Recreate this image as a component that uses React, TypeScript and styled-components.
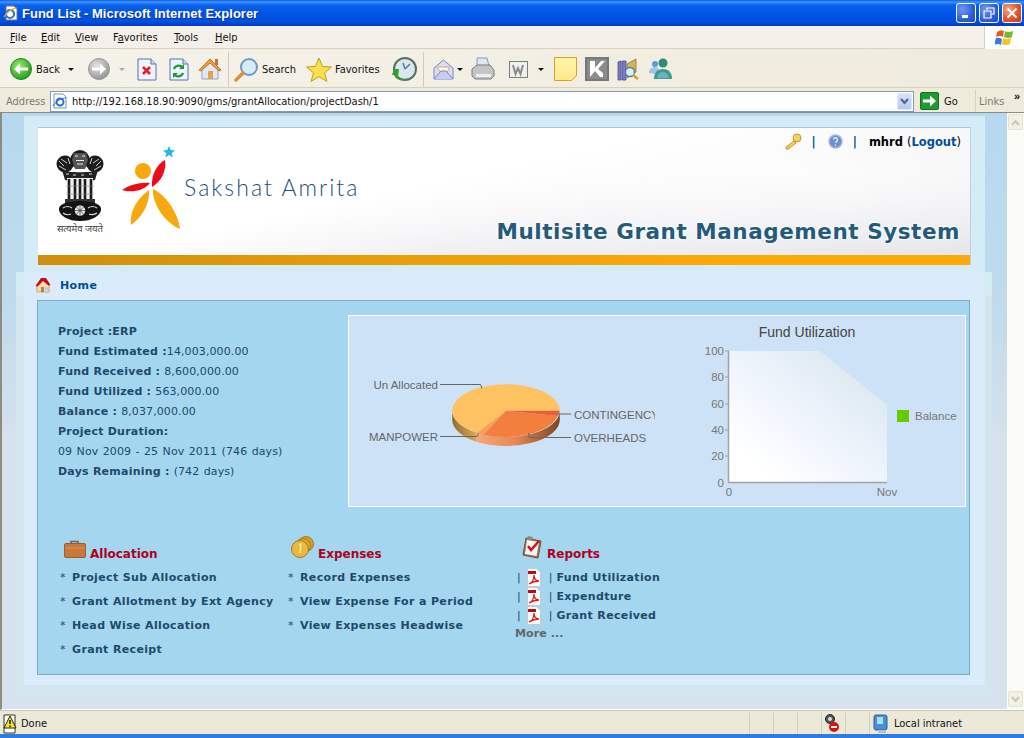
import React from "react";
import styled, { createGlobalStyle } from "styled-components";

const GlobalStyle = createGlobalStyle`
  html, body { margin: 0; padding: 0; height: 100%; overflow: hidden; background: #ece9d8; }
  #root { height: 100%; }
`;

const Window = styled.div`
  width: 1024px;
  height: 738px;
  display: flex;
  flex-direction: column;
  overflow: hidden;
  font-family: "DejaVu Sans Condensed", "Liberation Sans", Arial, sans-serif;
`;

/* ---------- chrome ---------- */
const TitleBar = styled.div`
  height: 26px;
  flex: none;
  display: flex;
  align-items: center;
  padding: 0 2px 0 3px;
  background: linear-gradient(#0a5fe8 0, #3f94ff 2px, #0a62ee 5px, #0055e5 13px, #0050de 21px, #003cc8 26px);
`;
const TitleText = styled.span`
  margin-left: 3px;
  color: #fff;
  font: bold 13px "Liberation Sans", Arial, sans-serif;
  text-shadow: 1px 1px 0 #0a2f9a;
  flex: 1;
`;
const CaptionButton = styled.div<{ $danger?: boolean; $ml?: number }>`
  width: 20px;
  height: 20px;
  box-sizing: border-box;
  margin-left: ${(p) => p.$ml ?? 0}px;
  border: 1px solid #fff;
  border-radius: 3px;
  display: flex;
  align-items: center;
  justify-content: center;
  background: ${(p) =>
    p.$danger
      ? "radial-gradient(circle at 30% 30%, #f2a58b, #e0562c 55%, #c1370f)"
      : "radial-gradient(circle at 30% 30%, #6f97f0, #2f5ed8 60%, #2048c0)"};
`;
const MenuBar = styled.div`
  height: 23px;
  flex: none;
  display: flex;
  align-items: center;
  background: #f4efe8;
  border-bottom: 1px solid #d8d2bd;
  box-sizing: border-box;
  padding-left: 10px;
`;
const MenuItem = styled.span<{ $w: number }>`
  width: ${(p) => p.$w}px;
  font-size: 11px;
  padding-top: 1px;
  color: #111;
  u { text-decoration: underline; }
`;
const FlagBox = styled.div`
  margin-left: auto;
  width: 39px;
  height: 23px;
  background: #fff;
  border-left: 1px solid #d8d2bd;
  display: flex;
  align-items: center;
  justify-content: center;
`;
const Toolbar = styled.div`
  height: 39px;
  flex: none;
  display: flex;
  align-items: center;
  padding: 2px 0 0 10px;
  box-sizing: border-box;
  background: linear-gradient(90deg, #f5f2ea, #efebdd);
  border-bottom: 1px solid #d8d2bd;
`;
const Glyph = styled.svg<{ $ml?: number }>`
  flex: none;
  display: block;
  margin-left: ${(p) => p.$ml ?? 0}px;
`;
const ToolLabel = styled.span<{ $ml?: number; $w: number }>`
  font-size: 11px;
  color: #111;
  flex: none;
  width: ${(p) => p.$w}px;
  margin-left: ${(p) => p.$ml ?? 0}px;
`;
const DropArrow = styled.span<{ $ml: number; $grey?: boolean }>`
  flex: none;
  width: 0;
  height: 0;
  margin-left: ${(p) => p.$ml}px;
  border-left: 3px solid transparent;
  border-right: 3px solid transparent;
  border-top: 3px solid ${(p) => (p.$grey ? "#b0aea4" : "#111")};
`;
const ToolSep = styled.span<{ $ml: number }>`
  flex: none;
  width: 1px;
  height: 35px;
  margin-left: ${(p) => p.$ml}px;
  background: #d3ccb5;
`;
const AddressBar = styled.div`
  height: 24px;
  flex: none;
  display: flex;
  align-items: center;
  box-sizing: border-box;
  padding: 2px 0 0 6px;
  background: #eeebdd;
`;
const AddressLabel = styled.span`
  font-size: 11px;
  color: #7d7a6e;
  width: 44px;
  flex: none;
`;
const AddressField = styled.div`
  width: 864px;
  height: 21px;
  flex: none;
  box-sizing: border-box;
  display: flex;
  align-items: center;
  background: #fff;
  border: 1px solid #7f9db9;
  padding: 0 1px;
`;
const Url = styled.span`
  margin-left: 4px;
  font-size: 11px;
  color: #111;
  flex: 1;
`;
const ComboButton = styled.div`
  width: 15px;
  height: 17px;
  border-radius: 2px;
  background: linear-gradient(#d6e2fb, #b4c9f5);
  border: 1px solid #dde6fa;
  box-sizing: border-box;
  display: flex;
  align-items: center;
  justify-content: center;
`;
const LinksBox = styled.div`
  margin-left: auto;
  width: 49px;
  height: 22px;
  box-sizing: border-box;
  border-left: 1px solid #d8d2bd;
  padding: 0 4px 0 3px;
  display: flex;
  align-items: center;
  justify-content: space-between;
  color: #7d7a6e;
  font-size: 11px;
`;
const Chevrons = styled.span`
  color: #111;
  font: bold 11px "Liberation Sans", Arial, sans-serif;
  align-self: flex-start;
`;
const Viewport = styled.div`
  flex: 1;
  min-height: 0;
  display: flex;
  border-top: 1px solid #8d8c80;
`;
const Page = styled.div`
  width: 1007px;
  flex: none;
  box-sizing: border-box;
  border-left: 2px solid #8d8c80;
  border-bottom: 1px solid #fff;
  padding-left: 1px;
  background: linear-gradient(#b6d9ef 0, #bedbec 170px, #c3dceb 225px, #c9dded 240px, #d0dfed 300px, #d6e2ee 322px);
  overflow: hidden;
`;
const Scrollbar = styled.div`
  width: 17px;
  flex: none;
  display: flex;
  flex-direction: column;
  justify-content: space-between;
  background: #fbfbf8;
  padding: 1px 0 3px;
  box-sizing: border-box;
`;
const ScrollButton = styled.div`
  width: 15px;
  height: 16px;
  margin-left: 1px;
  border-radius: 2px;
  border: 1px solid #e4e2d2;
  box-sizing: border-box;
  background: #f2f1e6;
  color: #c8c6b8;
  display: flex;
  align-items: center;
  justify-content: center;
`;
const StatusBar = styled.div`
  height: 24px;
  flex: none;
  box-sizing: border-box;
  display: flex;
  align-items: center;
  background: #ece9d8;
  border-top: 1px solid #c9c6b4;
  padding: 2px 0 0 3px;
  font-size: 11px;
  color: #111;
`;
const StatusText = styled.span`
  margin-left: 4px;
  width: 728px;
  flex: none;
`;
const StatusCell = styled.div<{ $w: number }>`
  width: ${(p) => p.$w}px;
  height: 22px;
  flex: none;
  box-sizing: border-box;
  border-left: 1px solid #d2cfbc;
  display: flex;
  align-items: center;
  gap: 4px;
  padding-left: 3px;
`;
const TaskEdge = styled.div`
  height: 4px;
  flex: none;
  background: #2f7be0;
`;

/* ---------- page ---------- */
const MidBand = styled.div`
  margin: 0 15px 0 13px;
  padding: 3px 7px 11px 8px;
  box-sizing: border-box;
  background: linear-gradient(transparent 0, transparent 159px, #d5ecf5 159px, #d5ecf5 183px, #d3e6ef 183px);
`;
const Sheet = styled.div`
  padding: 11px 15px 10px 13px;
  background: linear-gradient(#d3ecf6 0, #d3ecf6 152px, #daecfc 158px);
`;
const Banner = styled.div`
  height: 138px;
  margin-left: 1px;
  box-sizing: border-box;
  display: flex;
  flex-direction: column;
  border-top: 1px solid #a9cbe0;
  box-shadow: 1px 0 0 #b7d2e4;
  background:
    radial-gradient(ellipse 620px 90px at 78% 32%, rgba(255, 255, 255, 0.85), rgba(255, 255, 255, 0) 100%),
    linear-gradient(168deg, #fff 0, #fff 42%, #f1f0f3 62%, #e4e4e9 100%);
`;
const TopLinks = styled.div`
  height: 22px;
  flex: none;
  box-sizing: border-box;
  padding: 5px 9px 0 0;
  display: flex;
  align-items: center;
  justify-content: flex-end;
  font: 11.5px "DejaVu Sans", Verdana, sans-serif;
`;
const Pipe = styled.b<{ $ml: number }>`
  color: #004f93;
  margin-left: ${(p) => p.$ml}px;
`;
const UserName = styled.b`
  color: #000;
  margin-left: 12px;
  margin-right: 4px;
`;
const LogoutLink = styled.b`
  color: #004f93;
`;
const BannerBody = styled.div`
  flex: 1;
  display: flex;
  min-height: 0;
  padding-left: 18px;
`;
const EmblemWrap = styled.div`
  width: 48px;
  flex: none;
  display: flex;
  flex-direction: column;
  align-items: center;
`;
const Motto = styled.span`
  font: 9.5px/13px "Noto Sans", "DejaVu Sans", sans-serif;
  color: #444;
  white-space: nowrap;
`;
const LogoMark = styled.svg`
  flex: none;
  margin: -6px 0 0 16px;
`;
const BrandName = styled.span`
  font: 300 23px Lato, "Open Sans", sans-serif;
  letter-spacing: 2.05px;
  color: #1f4f78;
  margin: 23px 0 0 2px;
  white-space: nowrap;
`;
const SystemName = styled.span`
  margin: 69px 10px 0 auto;
  font: bold 21.5px "DejaVu Sans", Verdana, sans-serif;
  letter-spacing: 0.55px;
  color: #235c7b;
  white-space: nowrap;
  text-shadow: 0 0 2px #fff, 0 0 3px #fff, 0 0 3px #fff;
`;
const OrangeBar = styled.div`
  height: 10px;
  flex: none;
  background: linear-gradient(90deg, #cf8e0c 0, #e29c08 30%, #ffa908 75%);
`;
const Crumb = styled.div`
  height: 35px;
  display: flex;
  align-items: center;
  padding-top: 5px;
  box-sizing: border-box;
  margin-left: -2px;
`;
const CrumbLink = styled.b`
  margin-left: 9px;
  color: #004f93;
  font: bold 11px "DejaVu Sans", Verdana, sans-serif;
  letter-spacing: 0.4px;
`;
const Panel = styled.div`
  height: 375px;
  box-sizing: border-box;
  background: #a4d6ef;
  border: 1px solid #7fa9c8;
  padding: 14px 3px 0 20px;
  display: flex;
  flex-direction: column;
`;
const TopRow = styled.div`
  display: flex;
  height: 192px;
  flex: none;
`;
const InfoColumn = styled.div`
  width: 290px;
  flex: none;
  padding-top: 7px;
`;
const InfoLine = styled.div`
  height: 20px;
  font: 11px/20px "DejaVu Sans", Verdana, sans-serif;
  letter-spacing: 0.1px;
  word-spacing: 0.8px;
  color: #20496b;
  white-space: nowrap;
  b {
    letter-spacing: 0.23px;
    word-spacing: 0;
  }
`;
const ChartPanel = styled.div`
  width: 618px;
  flex: none;
  box-sizing: border-box;
  border: 1px solid #fff;
  background: #cde2f6;
  display: flex;
`;
const ChartSvg = styled.svg`
  display: block;
  flex: none;
  font-family: "Liberation Sans", Arial, sans-serif;
`;
const LinkColumns = styled.div`
  display: flex;
  margin-top: 27px;
  padding-left: 2px;
`;
const LinkColumn = styled.div<{ $w: number }>`
  width: ${(p) => p.$w}px;
  flex: none;
`;
const ColumnHead = styled.div<{ $ml: number }>`
  height: 31px;
  display: flex;
  align-items: flex-end;
  gap: 4px;
  padding: 0 0 4px ${(p) => p.$ml}px;
  box-sizing: border-box;
`;
const HeadTitle = styled.b`
  font: bold 12px/15px "DejaVu Sans", Verdana, sans-serif;
  color: #b00020;
  margin-bottom: -1px;
`;
const LinkRow = styled.div`
  height: 24px;
  display: flex;
  align-items: center;
  font: 11px "DejaVu Sans", Verdana, sans-serif;
  color: #20496b;
  white-space: nowrap;
`;
const Bullet = styled.span`
  width: 12px;
  flex: none;
`;
const LinkLabel = styled.b`
  letter-spacing: 0.35px;
`;
const ReportList = styled.div`
  padding-top: 3px;
`;
const ReportRow = styled.div`
  height: 19px;
  display: flex;
  align-items: center;
  font: 11px "DejaVu Sans", Verdana, sans-serif;
  color: #20496b;
  white-space: nowrap;
  padding-left: 2px;
`;
const ReportPipe = styled.span<{ $l: number; $r: number }>`
  margin: 0 ${(p) => p.$r}px 0 ${(p) => p.$l}px;
`;
const MoreLink = styled.b`
  display: block;
  color: #666;
  font: bold 11px/18px "DejaVu Sans", Verdana, sans-serif;
  letter-spacing: 0.1px;
`;

/* ---------- icons ---------- */
const RoundArrow = ({ ml, grey }: { ml?: number; grey?: boolean }) => (
  <Glyph $ml={ml} width={22} height={22} viewBox="0 0 22 22">
    <defs>
      <radialGradient id={grey ? "gr" : "gn"} cx="40%" cy="35%" r="70%">
        <stop offset="0" stopColor={grey ? "#e6e6e6" : "#9be86a"} />
        <stop offset="1" stopColor={grey ? "#8f8f8f" : "#1d9a1d"} />
      </radialGradient>
    </defs>
    <circle cx="11" cy="11" r="10.500" fill={`url(#${grey ? "gr" : "gn"})`} stroke={grey ? "#999" : "#1c8a1c"} />
    {grey ? (
      <path d="M4 9.500h8V5.500L18 11l-6 5.500v-4H4z" fill="#fff" />
    ) : (
      <path d="M18 9.500h-8V5.500L4 11l6 5.500v-4h8z" fill="#fff" />
    )}
  </Glyph>
);

const PageSheet = ({ children, ml }: { children: React.ReactNode; ml: number }) => (
  <Glyph $ml={ml} width="20" height="23" viewBox="0 0 20 23">
    <path d="M1 1h13l5 5v16H1z" fill="#eef3fd" stroke="#5a70b0" />
    <path d="M14 1v5h5" fill="#cfdcf5" stroke="#5a70b0" />
    {children}
  </Glyph>
);

const ToolbarHouse = ({ ml }: { ml: number }) => (
  <Glyph $ml={ml} width={24} height={24} viewBox="0 0 24 24">
    <path d="M4 11v11h16V11L12 4z" fill="#dfe8f8" stroke="#8fa4c8" />
    <path d="M1 13L12 2l11 11-2 1-9-8-9 8z" fill="#f39a3c" stroke="#c9702a" />
    <rect x="17" y="2" width="3" height="6" fill="#c9702a" />
    <rect x="10" y="14" width="5" height="8" fill="#e8a04a" />
  </Glyph>
);

const CrumbHouse = () => (
  <Glyph width="16" height="16" viewBox="0 0 16 16">
    <path d="M2 8v7h12V8L8 3z" fill="#f7dcae" stroke="#c9a878" />
    <path d="M0.500 9L6 1h5l4.500 7-2 .5L8 4 2.500 9.500z" fill="#c80a14" />
    <rect x="6" y="10" width="3" height="5" fill="#b8824a" />
    <rect x="10" y="10" width="3" height="3" fill="#b8d0e8" />
  </Glyph>
);

const Emblem = () => (
  <Glyph width="48" height="72" viewBox="0 0 48 72">
    <circle cx="24" cy="9.500" r="9.500" fill="#1c1c1c" />
    <circle cx="9" cy="14" r="8.500" fill="#1c1c1c" />
    <circle cx="39" cy="14" r="8.500" fill="#1c1c1c" />
    <path d="M18 3h12l2 7-3 9H19l-3-9z" fill="#555" />
    <path d="M19 6h3M26 6h3M20 10.500h8M21 14h6" stroke="#eee" strokeWidth="1.200" />
    <path d="M3 11l5 5M5 9l6 4M3 16l7 4M45 11l-5 5M43 9l-6 4M45 16l-7 4M12 8l2 6M36 8l-2 6" stroke="#ccc" />
    <path d="M6 20c6 3 30 3 36 0l-3 10c-5 2-25 2-30 0z" fill="#222" />
    <path d="M10 24h3M17 25h3M25 25h3M33 24h3" stroke="#ddd" />
    <rect x="11" y="28" width="26" height="22" fill="#f2f2f2" />
    <path d="M13 29v20M19 29v20M24 29v20M29 29v20M35 29v20" stroke="#1a1a1a" strokeWidth="2.600" />
    <path d="M10 36h28M10 44h28" stroke="#888" strokeWidth="0.600" />
    <path d="M9 49h30v4H9z" fill="#333" />
    <path d="M3 60c-1-5 6-9 21-9s22 4 21 9c-1 6-9 11-21 11S4 66 3 60z" fill="#141414" />
    <path d="M7 58c3-2 6-2 9 0M7 63c3 2 6 2 8 1M32 58c3-2 6-2 9 0M33 64c3 1 5 1 8-1" fill="none" stroke="#ddd" strokeWidth="1.200" />
    <circle cx="24" cy="60.500" r="6" fill="#e8e8e8" stroke="#111" strokeWidth="1.500" />
    <path d="M24 55.500v10M19 60.500h10M20.500 57l7 7M27.500 57l-7 7" stroke="#333" strokeWidth="0.700" />
  </Glyph>
);

const SectionPdf = () => (
  <Glyph width="14" height="19" viewBox="0 0 14 19">
    <path d="M0.500 0.500h9l4 4v14H0.500z" fill="#fbfbfb" stroke="#c8c8c8" />
    <rect x="1" y="3" width="8" height="3" fill="#b01010" />
    <path d="M2 16c3-1 5-5 5-9 0 4 2 6 5 6-3 0-7 1-10 3z" fill="none" stroke="#e01818" strokeWidth="1.300" />
  </Glyph>
);

const LINK_ROWS = {
  allocation: ["Project Sub Allocation", "Grant Allotment by Ext Agency", "Head Wise Allocation", "Grant Receipt"],
  expenses: ["Record Expenses", "View Expense For a Period", "View Expenses Headwise"],
  reports: ["Fund Utilization", "Expendture", "Grant Received"],
};

const INFO: [string, string][] = [
  ["Project :", "ERP"],
  ["Fund Estimated :", "14,003,000.00"],
  ["Fund Received : ", "8,600,000.00"],
  ["Fund Utilized : ", "563,000.00"],
  ["Balance : ", "8,037,000.00"],
  ["Project Duration:", ""],
  ["", "09 Nov 2009 - 25 Nov 2011 (746 days)"],
  ["Days Remaining : ", "(742 days)"],
];

const PieChart = () => (
  <ChartSvg width="306" height="190" viewBox="349 316 306 190">
    <defs>
      <linearGradient id="wallGold" x1="0" x2="1">
        <stop offset="0" stopColor="#8f6f30" />
        <stop offset="1" stopColor="#d8a95a" />
      </linearGradient>
      <linearGradient id="wallOrange" x1="0" x2="1">
        <stop offset="0" stopColor="#f6a578" />
        <stop offset="0.45" stopColor="#e88a58" />
        <stop offset="1" stopColor="#7d4525" />
      </linearGradient>
    </defs>
    <path d="M452.200 410.700A53.800 26.300 0 0 0 476.700 432.700V441.700A53.800 26.300 0 0 1 452.200 419.700z" fill="url(#wallGold)" />
    <path d="M476.700 432.700A53.800 26.300 0 0 0 559.800 410.700V419.700A53.800 26.300 0 0 1 476.700 441.700z" fill="url(#wallOrange)" />
    <path d="M506 410.700L559.800 410.700A53.800 26.300 0 1 0 476.700 432.700z" fill="#fec263" />
    <path d="M506 410.700L483.300 434.700 476.700 432.700z" fill="#f8a055" />
    <path d="M506 410.700L557.700 416A53.800 26.300 0 0 1 483.300 434.700z" fill="#f37f3f" />
    <path d="M506 410.700L559.800 410.700 557.700 416z" fill="#ec5f33" />
    <g fill="none" stroke="#666" strokeWidth="1">
      <path d="M440 384.500h40.500l1.500 4" />
      <path d="M440 436.500h37l1.500-3" />
      <path d="M558 414h13" />
      <path d="M528.500 433l1 4.500H571" />
    </g>
    <g fontSize="11.500" fill="#666">
      <text x="438" y="389" textAnchor="end">Un Allocated</text>
      <text x="438" y="441" textAnchor="end">MANPOWER</text>
      <text x="574" y="419">CONTINGENCY</text>
      <text x="574" y="442">OVERHEADS</text>
    </g>
  </ChartSvg>
);

const UtilChart = () => (
  <ChartSvg width="310" height="190" viewBox="655 316 310 190">
    <defs>
      <linearGradient id="plotFill" x1="0" y1="1" x2="1" y2="0">
        <stop offset="0.15" stopColor="#ffffff" />
        <stop offset="0.5" stopColor="#eef4fc" />
        <stop offset="0.8" stopColor="#deeaf3" />
        <stop offset="1" stopColor="#cde4f4" />
      </linearGradient>
    </defs>
    <path d="M729 351H820L887 405V482H729z" fill="url(#plotFill)" />
    <path d="M728.500 350.500V482.500H887" fill="none" stroke="#a3a3a3" strokeWidth="1.500" />
    <path d="M725 351h3M725 377h3M725 404h3M725 430h3M725 456h3" stroke="#a3a3a3" />
    <text x="807" y="337" textAnchor="middle" fontSize="14" fill="#444">Fund Utilization</text>
    <g fontSize="11.500" fill="#777" textAnchor="end">
      <text x="724" y="355">100</text>
      <text x="724" y="381">80</text>
      <text x="724" y="408">60</text>
      <text x="724" y="434">40</text>
      <text x="724" y="460">20</text>
      <text x="724" y="487">0</text>
    </g>
    <g fontSize="11.500" fill="#777">
      <text x="729" y="496" textAnchor="middle">0</text>
      <text x="887" y="496" textAnchor="middle">Nov</text>
      <text x="915" y="420">Balance</text>
    </g>
    <rect x="897" y="410" width="12" height="12" fill="#66cc00" />
  </ChartSvg>
);

export default function App() {
  return (
    <>
      <GlobalStyle />
      <Window>
        <TitleBar>
          <Glyph width="16" height="16" viewBox="0 0 16 16">
            <path d="M3 1h8l3 3v11H3z" fill="#fff" stroke="#777" />
            <circle cx="7" cy="9" r="4" fill="none" stroke="#2a6fd0" strokeWidth="2" />
            <path d="M1 12C5 5 11 3 14 3" fill="none" stroke="#e8b030" strokeWidth="1.200" />
          </Glyph>
          <TitleText>Fund List - Microsoft Internet Explorer</TitleText>
          <CaptionButton>
            <Glyph width="12" height="12" viewBox="0 0 12 12"><rect x="2" y="8" width="6" height="3" fill="#fff" /></Glyph>
          </CaptionButton>
          <CaptionButton $ml={3}>
            <Glyph width="12" height="12" viewBox="0 0 12 12">
              <path d="M4 3V1h7v6H9M1 4h7v7H1z" fill="none" stroke="#fff" strokeWidth="1.200" />
            </Glyph>
          </CaptionButton>
          <CaptionButton $ml={3} $danger>
            <Glyph width="12" height="12" viewBox="0 0 12 12">
              <path d="M1.500 1.500l9 9M10.500 1.500l-9 9" stroke="#fff" strokeWidth="2" />
            </Glyph>
          </CaptionButton>
        </TitleBar>

        <MenuBar>
          <MenuItem $w={31}><u>F</u>ile</MenuItem>
          <MenuItem $w={34}><u>E</u>dit</MenuItem>
          <MenuItem $w={38}><u>V</u>iew</MenuItem>
          <MenuItem $w={61}>F<u>a</u>vorites</MenuItem>
          <MenuItem $w={41}><u>T</u>ools</MenuItem>
          <MenuItem $w={30}><u>H</u>elp</MenuItem>
          <FlagBox>
            <Glyph width="20" height="18" viewBox="0 0 20 18">
              <path d="M2 4q4-3 7-1l-1 6q-3-2-7 0z" fill="#e8582a" />
              <path d="M10 3q3 2 8 0l-1 6q-4 2-8 0z" fill="#7ab82e" />
              <path d="M1 10q3-1 6 1l-1 6q-3-2-7 0z" fill="#3a7ae0" />
              <path d="M8 10q4 2 8 0l-1 6q-4 2-8 0z" fill="#f5c422" />
            </Glyph>
          </FlagBox>
        </MenuBar>

        <Toolbar>
          <RoundArrow />
          <ToolLabel $ml={4} $w={23}>Back</ToolLabel>
          <DropArrow $ml={9} />
          <RoundArrow ml={14} grey />
          <DropArrow $ml={9} $grey />
          <PageSheet ml={12}>
            <path d="M6 9l7 7M13 9l-7 7" stroke="#e02020" strokeWidth="2.500" />
          </PageSheet>
          <PageSheet ml={12}>
            <path d="M5 11a5 5 0 0 1 9-1M14 15a5 5 0 0 1-9 1" fill="none" stroke="#1e9a2e" strokeWidth="2.200" />
            <path d="M15 6v5h-5zM4 20v-5h5z" fill="#1e9a2e" />
          </PageSheet>
          <ToolbarHouse ml={9} />
          <ToolSep $ml={6} />
          <Glyph $ml={5} width="25" height="25" viewBox="0 0 25 25">
            <circle cx="15" cy="10" r="8" fill="#d6ecfb" stroke="#6e97c6" strokeWidth="2" />
            <path d="M9 16l-7 7" stroke="#d9923c" strokeWidth="3.500" strokeLinecap="round" />
          </Glyph>
          <ToolLabel $ml={3} $w={33}>Search</ToolLabel>
          <Glyph $ml={11} width="26" height="25" viewBox="0 0 26 25">
            <path d="M13 1l3.500 8.500 9 .5-7 5.800 2.400 8.700L13 19.600 5.100 24.500l2.400-8.700-7-5.800 9-.5z" fill="#ffdf4a" stroke="#bf9a20" />
          </Glyph>
          <ToolLabel $ml={3} $w={45}>Favorites</ToolLabel>
          <Glyph $ml={12} width="25" height="25" viewBox="0 0 25 25">
            <circle cx="13" cy="12" r="11" fill="#d9e6ee" stroke="#5d6e60" strokeWidth="2" />
            <path d="M13 12l5-5M13 12l-2-6" stroke="#5a7ab0" strokeWidth="1.500" />
            <path d="M2 12l5 0-1 8c3 3 7 2 10 1-6 4-12 2-14-3l-2 0z" fill="#2ba02b" />
          </Glyph>
          <ToolSep $ml={6} />
          <Glyph $ml={9} width="21" height="23" viewBox="0 0 21 23">
            <path d="M1 10L10.500 2 20 10v11H1z" fill="#dcdcf6" stroke="#7a82c8" />
            <path d="M4 9h13l-3 5H7z" fill="#fff6d8" stroke="#c9b070" />
            <path d="M1 21l7-8h5l7 8" fill="#c9cdf3" stroke="#7a82c8" />
          </Glyph>
          <DropArrow $ml={3} />
          <Glyph $ml={8} width="24" height="25" viewBox="0 0 24 25">
            <path d="M6 1h10l2 8H6z" fill="#dce8f2" stroke="#8a9bb0" />
            <path d="M1 12l5-4h13l4 5v6l-3 3H4l-3-3z" fill="#c4c4c4" stroke="#7d7d7d" />
            <path d="M5 17h15v3H5z" fill="#efefef" />
          </Glyph>
          <Glyph $ml={14} width="19" height="17" viewBox="0 0 19 17">
            <rect x="0.500" y="0.500" width="18" height="16" fill="#f0f0f0" stroke="#7d7d7d" />
            <path d="M4 4l2.500 9 2.500-6 2.500 6L14 4" fill="none" stroke="#8a8a8a" strokeWidth="2" />
          </Glyph>
          <DropArrow $ml={10} />
          <Glyph $ml={10} width="23" height="24" viewBox="0 0 23 24">
            <defs>
              <linearGradient id="noteFill" x1="0" y1="0" x2="0" y2="1">
                <stop offset="0" stopColor="#fff6a8" />
                <stop offset="1" stopColor="#ffe88a" />
              </linearGradient>
            </defs>
            <path d="M0.500 0.500h22v18l-5 5h-17z" fill="url(#noteFill)" stroke="#d7a01e" />
          </Glyph>
          <Glyph $ml={8} width="24" height="24" viewBox="0 0 24 24">
            <rect x="1" y="1" width="22" height="22" fill="#8b8b8b" stroke="#777" strokeWidth="2" />
            <path d="M5 4h5v7l6-7h4l-7 8 5 4v4h-3l-5-6-5 6z" fill="#fff" />
          </Glyph>
          <Glyph $ml={8} width="23" height="23" viewBox="0 0 23 23">
            <path d="M1 4l3-1v19H1zM5 3h4v19H5z" fill="#7c7cc4" stroke="#4d4d90" strokeWidth="0.800" />
            <path d="M10 6l9-5v13l-9 6z" fill="#d2b45a" stroke="#8c7430" strokeWidth="0.800" />
            <circle cx="13" cy="14" r="4.500" fill="#d8ecfa" stroke="#5c7a9a" strokeWidth="1.300" />
            <path d="M16 17l5 4" stroke="#d9a020" strokeWidth="2.500" />
          </Glyph>
          <Glyph $ml={8} width="25" height="22" viewBox="0 0 25 22">
            <circle cx="7" cy="6" r="3" fill="#5b9bd8" />
            <path d="M1 15c0-4 3-6 6-6s4 2 4 4l-4 3z" fill="#9ec4e8" />
            <circle cx="15" cy="5" r="4.500" fill="#2f8a78" />
            <path d="M6 21c0-6 3-10 9-10s9 4 9 10z" fill="#3f9c88" />
            <path d="M9 20c1-4 3-6 6-6s5 2 6 6z" fill="#6cb0c8" />
          </Glyph>
        </Toolbar>

        <AddressBar>
          <AddressLabel>Address</AddressLabel>
          <AddressField>
            <Glyph width="16" height="16" viewBox="0 0 16 16">
              <path d="M2 1h9l3 3v11H2z" fill="#fff" stroke="#7b8fb5" />
              <circle cx="8" cy="9" r="3.500" fill="none" stroke="#2a70cc" strokeWidth="2" />
              <path d="M1 13C5 7 10 5 14 5" fill="none" stroke="#2a70cc" />
            </Glyph>
            <Url>http://192.168.18.90:9090/gms/grantAllocation/projectDash/1</Url>
            <ComboButton>
              <Glyph width="9" height="7" viewBox="0 0 9 7">
                <path d="M1 1l3.500 4L8 1" fill="none" stroke="#4d6185" strokeWidth="2" />
              </Glyph>
            </ComboButton>
          </AddressField>
          <Glyph $ml={6} width="19" height="18" viewBox="0 0 19 18">
            <rect x="0.500" y="0.500" width="18" height="17" rx="1.500" fill="#1f9a30" stroke="#14701f" />
            <path d="M3 7.500h7V3.500l6 5.500-6 5.500v-4H3z" fill="#fff" />
          </Glyph>
          <ToolLabel $ml={5} $w={14}>Go</ToolLabel>
          <LinksBox>
            Links
            <Chevrons>»</Chevrons>
          </LinksBox>
        </AddressBar>

        <Viewport>
          <Page>
            <MidBand>
              <Sheet>
                <Banner>
                  <TopLinks>
                    <Glyph width="18" height="17" viewBox="0 0 18 17">
                      <circle cx="13" cy="5" r="4" fill="#f6cf62" stroke="#c9982c" />
                      <path d="M10 8L2 14l0 2 3 0 0-2 2 0 5-4z" fill="#f6cf62" stroke="#c9982c" />
                    </Glyph>
                    <Pipe $ml={9}>|</Pipe>
                    <Glyph $ml={12} width="15" height="15" viewBox="0 0 15 15">
                      <circle cx="7.500" cy="7.500" r="6.500" fill="#6c8fd0" stroke="#a5b9dd" strokeWidth="1.500" />
                      <path d="M5.500 5.500a2 2 0 1 1 2.500 2.200V9M7.500 10.500v1.500" fill="none" stroke="#e9effa" strokeWidth="1.300" />
                    </Glyph>
                    <Pipe $ml={10}>|</Pipe>
                    <UserName>mhrd</UserName>(<LogoutLink>Logout</LogoutLink>)
                  </TopLinks>
                  <BannerBody>
                    <EmblemWrap>
                      <Emblem />
                      <Motto>सत्यमेव जयते</Motto>
                    </EmblemWrap>
                    <LogoMark width="62" height="88" viewBox="120 144 62 88">
                      <path d="M169 146l1.700 4 4.300.4-3.300 2.800 1 4.200-3.700-2.300-3.700 2.300 1-4.200-3.300-2.800 4.300-.4z" fill="#22b8ea" />
                      <circle cx="143" cy="171" r="8" fill="#f7a80c" />
                      <path d="M152 187c-1-12 5-23 13-27 2 10-4 22-13 27z" fill="#ee0a18" />
                      <path d="M150 183c-10-1-21 2-28 7 9 3 22 1 28-7z" fill="#ee0a18" />
                      <path d="M149 190c-11 8-20 21-18 35 10-7 19-20 18-35z" fill="#f7a80c" />
                      <path d="M153 189c-1 15 12 34 27 40-2-16-14-34-27-40z" fill="#f7a80c" />
                    </LogoMark>
                    <BrandName>Sakshat Amrita</BrandName>
                    <SystemName>Multisite Grant Management System</SystemName>
                  </BannerBody>
                  <OrangeBar />
                </Banner>

                <Crumb>
                  <CrumbHouse />
                  <CrumbLink>Home</CrumbLink>
                </Crumb>

                <Panel>
                  <TopRow>
                    <InfoColumn>
                      {INFO.map(([label, value]) => (
                        <InfoLine key={label + value}>
                          {label && <b>{label}</b>}
                          {label === "Project :" ? <b>{value}</b> : value}
                        </InfoLine>
                      ))}
                    </InfoColumn>
                    <ChartPanel>
                      <PieChart />
                      <UtilChart />
                    </ChartPanel>
                  </TopRow>

                  <LinkColumns>
                    <LinkColumn $w={228}>
                      <ColumnHead $ml={4}>
                        <Glyph width="22" height="21" viewBox="0 0 22 21">
                          <path d="M7 4V1.500h7V4" fill="none" stroke="#666" strokeWidth="1.500" />
                          <rect x="0.500" y="3.500" width="21" height="14" rx="1.500" fill="#c9783a" stroke="#9c5c30" />
                          <path d="M1 8h20" stroke="#dc9058" />
                        </Glyph>
                        <HeadTitle>Allocation</HeadTitle>
                      </ColumnHead>
                      {LINK_ROWS.allocation.map((t) => (
                        <LinkRow key={t}><Bullet>*</Bullet><LinkLabel>{t}</LinkLabel></LinkRow>
                      ))}
                    </LinkColumn>
                    <LinkColumn $w={227}>
                      <ColumnHead $ml={3}>
                        <Glyph width="23" height="25" viewBox="0 0 23 25">
                          <circle cx="15" cy="8" r="7.500" fill="#d3a02c" stroke="#a87c1c" />
                          <circle cx="12" cy="10" r="7.500" fill="#dcaa34" stroke="#a87c1c" />
                          <circle cx="9" cy="13" r="8.500" fill="#e8b840" stroke="#a87c1c" />
                          <path d="M8 9l2-1-1 9" fill="none" stroke="#fbe79a" strokeWidth="1.500" />
                        </Glyph>
                        <HeadTitle>Expenses</HeadTitle>
                      </ColumnHead>
                      {LINK_ROWS.expenses.map((t) => (
                        <LinkRow key={t}><Bullet>*</Bullet><LinkLabel>{t}</LinkLabel></LinkRow>
                      ))}
                    </LinkColumn>
                    <LinkColumn $w={200}>
                      <ColumnHead $ml={7}>
                        <Glyph width="21" height="26" viewBox="0 0 21 26">
                          <path d="M4 3l15 3-3 17L1 20z" fill="#a57855" stroke="#6e4e34" />
                          <path d="M5 5l12 2-2.500 14L3 19z" fill="#f5f5f5" />
                          <path d="M6 1l5 1-1 3-5-1z" fill="#8a8a8a" />
                          <path d="M6 11l3 4 8-9" fill="none" stroke="#d01020" strokeWidth="2.500" />
                        </Glyph>
                        <HeadTitle>Reports</HeadTitle>
                      </ColumnHead>
                      <ReportList>
                        {LINK_ROWS.reports.map((t) => (
                          <ReportRow key={t}>
                            <ReportPipe $l={0} $r={6}>|</ReportPipe>
                            <SectionPdf />
                            <ReportPipe $l={8} $r={4}>|</ReportPipe>
                            <LinkLabel>{t}</LinkLabel>
                          </ReportRow>
                        ))}
                        <MoreLink>More ...</MoreLink>
                      </ReportList>
                    </LinkColumn>
                  </LinkColumns>
                </Panel>
              </Sheet>
            </MidBand>
          </Page>
          <Scrollbar>
            <ScrollButton>
              <Glyph width="9" height="7" viewBox="0 0 9 7"><path d="M1 6l3.500-4L8 6" fill="none" stroke="currentColor" strokeWidth="2" /></Glyph>
            </ScrollButton>
            <ScrollButton>
              <Glyph width="9" height="7" viewBox="0 0 9 7"><path d="M1 1l3.500 4L8 1" fill="none" stroke="currentColor" strokeWidth="2" /></Glyph>
            </ScrollButton>
          </Scrollbar>
        </Viewport>

        <StatusBar>
          <Glyph width="14" height="20" viewBox="0 0 14 20">
            <path d="M1 1h11v18H1z" fill="#fff" stroke="#333" />
            <path d="M7 2l6 12H1z" fill="#f8e71c" stroke="#222" />
            <path d="M7 6v4M7 11.500v1.500" stroke="#111" strokeWidth="1.500" />
          </Glyph>
          <StatusText>Done</StatusText>
          <StatusCell $w={24} />
          <StatusCell $w={24} />
          <StatusCell $w={24} />
          <StatusCell $w={24}>
            <Glyph width="15" height="19" viewBox="0 0 15 19">
              <circle cx="5" cy="5" r="4.500" fill="#555" stroke="#222" />
              <circle cx="5" cy="5" r="2" fill="#ddd" />
              <circle cx="9" cy="13" r="5" fill="#e01010" />
              <rect x="6" y="12" width="6" height="2" fill="#fff" />
            </Glyph>
          </StatusCell>
          <StatusCell $w={24} />
          <StatusCell $w={150}>
            <Glyph width="17" height="20" viewBox="0 0 17 20">
              <rect x="1" y="1" width="13" height="15" rx="2" fill="#4a8ed8" stroke="#2f5f9a" />
              <path d="M4 3h6v7H4z" fill="#a8e0f0" />
              <rect x="5" y="16" width="8" height="3" fill="#b8c0cc" />
            </Glyph>
            Local intranet
          </StatusCell>
        </StatusBar>
        <TaskEdge />
      </Window>
    </>
  );
}
